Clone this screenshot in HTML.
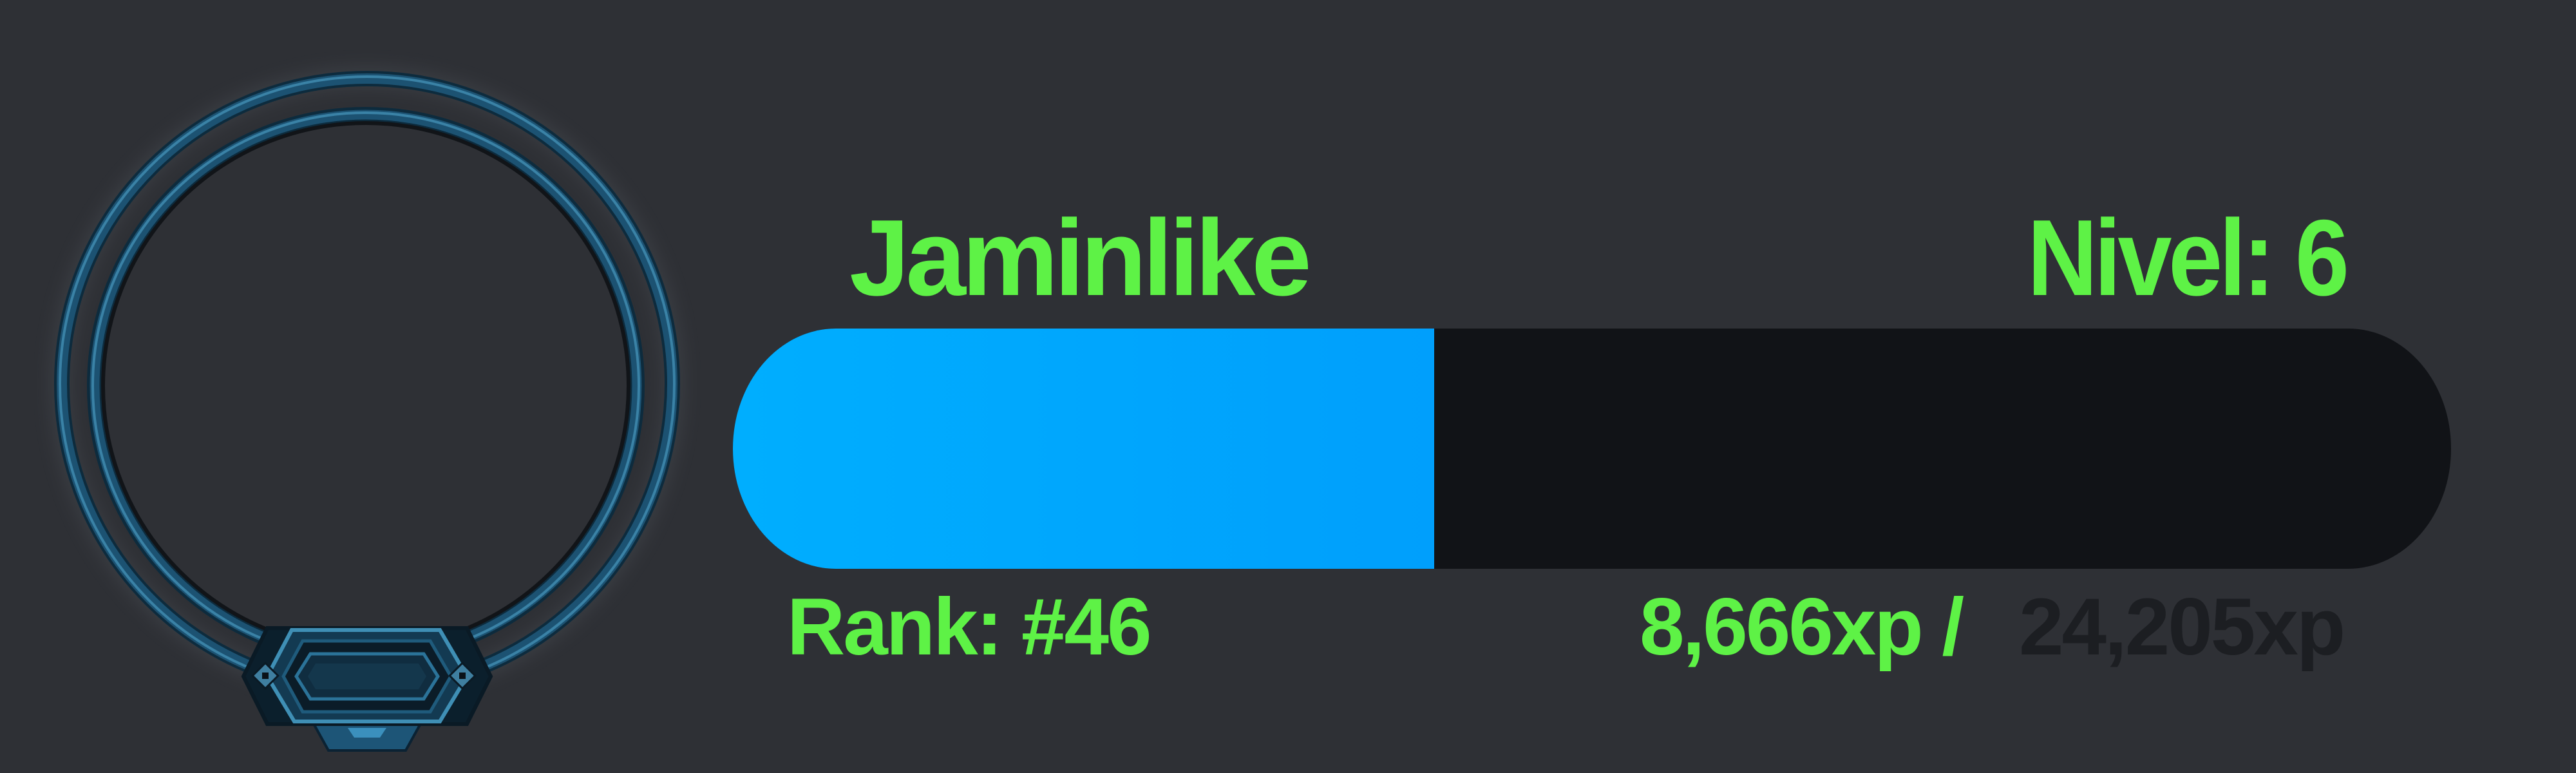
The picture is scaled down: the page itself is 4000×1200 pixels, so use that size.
<!DOCTYPE html>
<html><head><style>
html,body{margin:0;padding:0;background:#2e3035;width:4000px;height:1200px;overflow:hidden}
.t{position:absolute;font-family:"Liberation Sans",Arial,sans-serif;font-weight:bold;white-space:nowrap;line-height:1}
</style></head><body>
<svg width="1200" height="1200" style="position:absolute;left:0;top:0">
<defs>
<filter id="g" x="-20%" y="-20%" width="140%" height="140%"><feGaussianBlur stdDeviation="14"/></filter>
</defs>
<circle cx="570" cy="596" r="476" fill="none" stroke="#5a6068" stroke-width="30" opacity="0.3" filter="url(#g)"/>
<circle cx="570" cy="596" r="474" fill="none" stroke="#0d2b3d" stroke-width="24"/>
<circle cx="570" cy="596" r="474" fill="none" stroke="#1c5272" stroke-width="16"/>
<circle cx="570" cy="596" r="477" fill="none" stroke="#3a82a6" stroke-width="4"/>
<circle cx="568" cy="599" r="421" fill="none" stroke="#0d2b3d" stroke-width="24"/>
<circle cx="568" cy="599" r="421" fill="none" stroke="#1c5272" stroke-width="15"/>
<circle cx="568" cy="599" r="424" fill="none" stroke="#3a82a6" stroke-width="4"/>
<circle cx="568" cy="599" r="408" fill="none" stroke="#111418" stroke-width="6"/>
<polygon points="485,1120 655,1120 630,1165 510,1165" fill="#1d5577" stroke="#0b2233" stroke-width="4"/>
<polygon points="540,1130 600,1130 590,1145 550,1145" fill="#3b90bd"/>
<polygon points="415,975 725,975 762,1050 725,1124 415,1124 378,1050" fill="#0b1f2c" stroke="#0a1a25" stroke-width="6"/>
<polygon points="453,978 683,978 725,1050 683,1120 457,1120 415,1050" fill="#133a52" stroke="#3f8fb5" stroke-width="6"/>
<polygon points="470,995 668,995 700,1050 668,1105 470,1105 440,1050" fill="#0b1c28" stroke="#1f5b7c" stroke-width="5"/>
<polygon points="482,1015 658,1015 680,1050 658,1085 482,1085 460,1050" fill="#102d40" stroke="#2b7399" stroke-width="5"/>
<polygon points="490,1030 650,1030 662,1050 650,1070 490,1070 478,1050" fill="#14374c"/>
<rect x="398" y="1035" width="28" height="28" transform="rotate(45 412 1049)" fill="#3f7fa0" stroke="#0a1a25" stroke-width="3"/>
<rect x="407" y="1044" width="10" height="10" fill="#0a1218"/>
<rect x="704" y="1035" width="28" height="28" transform="rotate(45 718 1049)" fill="#3f7fa0" stroke="#0a1a25" stroke-width="3"/>
<rect x="713" y="1044" width="10" height="10" fill="#0a1218"/>
</svg>
<div style="position:absolute;left:1138px;top:510px;width:2668px;height:373px;border-radius:160px/186px;background:#111317;overflow:hidden">
  <div style="position:absolute;left:0;top:0;width:1089px;height:373px;background:linear-gradient(90deg,#00aefe,#009ffc)"></div>
</div>
<div class="t" style="left:1319px;top:316px;font-size:168px;color:#5ef246;letter-spacing:-6px">Jaminlike</div>
<div class="t" style="right:357px;top:316px;font-size:168px;color:#5ef246;letter-spacing:-6px;transform:scaleX(0.9);transform-origin:right">Nivel: 6</div>
<div class="t" style="left:1222px;top:911px;font-size:125px;color:#5ef246;letter-spacing:-3px">Rank: #46</div>
<div class="t" style="left:2546px;top:911px;font-size:125px;color:#5ef246;letter-spacing:-3px">8,666xp /</div>
<div class="t" style="left:3135px;top:911px;font-size:125px;color:#1c1e22;letter-spacing:-3px">24,205xp</div>
</body></html>
